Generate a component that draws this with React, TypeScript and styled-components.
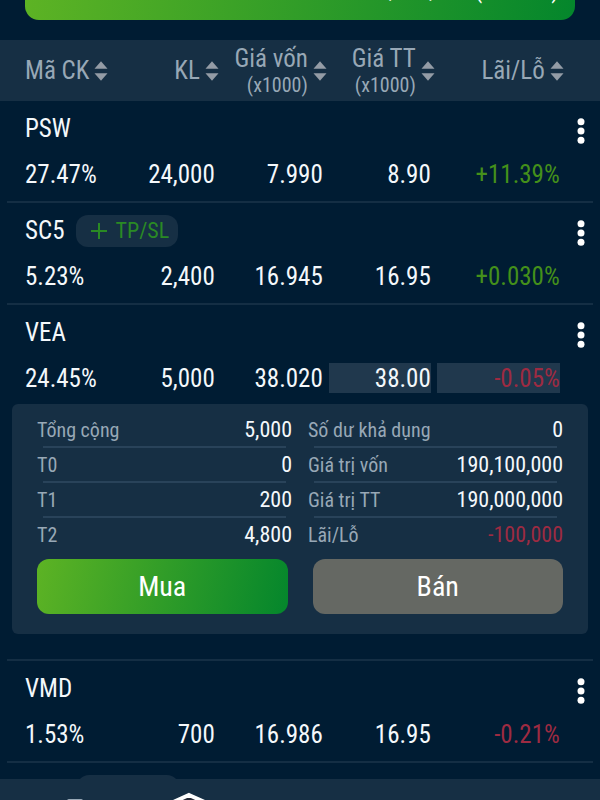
import React from "react";
import styled, { createGlobalStyle, css } from "styled-components";

const Global = createGlobalStyle`
  * { box-sizing: border-box; }
  body { margin: 0; background: #001c33; }
  body, button { font-family: "Roboto Condensed", Roboto, sans-serif; }
  svg { flex: none; }
`;

const Screen = styled.div`
  height: 100vh;
  display: flex;
  flex-direction: column;
  overflow: hidden;
  color: #f4f8fb;
  font-size: 25px;
  line-height: 30px;
`;

const Banner = styled.section`
  flex: none;
  height: 20px;
  margin: 0 25px 20px;
  padding: 0 16px 15px 0;
  display: flex;
  align-items: flex-end;
  justify-content: flex-end;
  overflow: hidden;
  border-radius: 0 0 14px 14px;
  background: linear-gradient(97deg, #5db324, #04862c);
  color: #ffffff;
  font-size: 24px;
`;

const List = styled.main`
  flex: 1;
  min-height: 0;
  overflow: hidden;
`;

const Table = styled.table`
  width: 100%;
  table-layout: fixed;
  border-collapse: collapse;

  td, th { padding: 0; font-weight: 400; }
`;

const Col = styled.col<{ $share?: number }>`
  width: ${(p) => (p.$share ? `${p.$share}%` : "auto")};
`;

const HeadRow = styled.tr`
  height: 61px;
  background: #162f44;
`;

const SortButton = styled.button<{ $start?: boolean }>`
  display: flex;
  align-items: center;
  justify-content: ${(p) => (p.$start ? "flex-start" : "flex-end")};
  gap: 5px;
  width: ${(p) => (p.$start ? "100%" : "calc(100% + 4px)")};
  padding: 0 0 0 ${(p) => (p.$start ? "25px" : "0")};
  border: 0;
  background: none;
  color: #98a8b6;
  font-size: 25px;
  line-height: 28px;
  text-align: right;
  white-space: nowrap;
`;

const Unit = styled.small`
  display: block;
  font-size: 20px;
  line-height: 24px;
`;

const NameRow = styled.tr`
  height: 52px;
`;

const NameLine = styled.div`
  display: flex;
  align-items: center;
  gap: 12px;
  padding: 3px 0 0 25px;
`;

const Chip = styled.button`
  display: flex;
  align-items: center;
  gap: 8px;
  height: 32px;
  padding: 0 9px 0 15px;
  border: 0;
  border-radius: 12px;
  background: #162f44;
  color: #2a8a24;
  font-size: 22px;
  line-height: 32px;
`;

const MoreButton = styled.button`
  display: flex;
  justify-content: center;
  width: 100%;
  padding: 8px 0 0 2px;
  border: 0;
  background: none;
  color: #ffffff;
`;

type Tone = "plain" | "up" | "down";
const tones: Record<Tone, string> = { plain: "inherit", up: "#44901a", down: "#9d2b42" };

const ValueRow = styled.tr`
  height: 42px;
`;

const Value = styled.div<{ $tone?: Tone; $lit?: boolean; $start?: boolean }>`
  margin-left: ${(p) => (p.$start ? "25px" : "6px")};
  padding-top: 1px;
  line-height: 29px;
  text-align: ${(p) => (p.$start ? "left" : "right")};
  color: ${(p) => tones[p.$tone ?? "plain"]};
  ${(p) => p.$lit && css`background: #20384d;`}
`;

const Divider = styled.div`
  margin: 6px 7px 0;
  height: 2px;
  background: #142e44;
`;

const Panel = styled.section`
  margin: 5px 12px 25px;
  height: 230px;
  padding: 7px 25px 0;
  border-radius: 6px;
  background: #162f44;
`;

const Facts = styled.div`
  display: grid;
  grid-template-columns: 1fr 1fr;
  column-gap: 16px;
`;

const FactList = styled.dl`
  margin: 0;
`;

const Fact = styled.div`
  display: flex;
  justify-content: space-between;
  height: 35px;
  padding-top: 5px;
  line-height: 28px;

  & + & { background: linear-gradient(#29435a, #29435a) center top / calc(100% - 12px) 2px no-repeat; }
`;

const Term = styled.dt`
  color: #98a8b6;
  font-size: 20px;
`;

const Amount = styled.dd<{ $tone?: Tone }>`
  margin: 0;
  color: ${(p) => tones[p.$tone ?? "plain"]};
  font-size: 22px;
`;

const Actions = styled.div`
  display: grid;
  grid-template-columns: 1fr 1fr;
  gap: 25px;
  margin-top: 8px;
`;

const Action = styled.button<{ $buy?: boolean }>`
  height: 55px;
  border: 0;
  border-radius: 12px;
  background: ${(p) => (p.$buy ? "linear-gradient(102deg, #5db324, #04862c)" : "#656863")};
  color: #ffffff;
  font-size: 28px;
`;

const Nav = styled.nav`
  flex: none;
  display: flex;
  height: 21px;
  overflow: hidden;
  background: #162f44;
`;

const Tab = styled.a<{ $active?: boolean }>`
  flex: 0 0 19%;
  display: flex;
  justify-content: center;
  padding-top: ${(p) => (p.$active ? "13px" : "18px")};
  color: ${(p) => (p.$active ? "#ffffff" : "#98a8b6")};

  &:first-child { flex-basis: 22%; padding-left: 18px; }
`;

const SortIcon = () => (
  <svg width="14" height="20" viewBox="0 0 14 20" fill="#949ca6" aria-hidden="true">
    <path d="M7 0.3 13.5 7.7H0.5Z" />
    <path d="M7 19.7 13.5 12.3H0.5Z" />
  </svg>
);

const PlusIcon = () => (
  <svg width="16" height="16" viewBox="0 0 16 16" stroke="currentColor" strokeWidth="2" aria-hidden="true">
    <path d="M8 0V16M0 8H16" />
  </svg>
);

const DotsIcon = () => (
  <svg width="8" height="28" viewBox="0 0 8 28" fill="currentColor" aria-hidden="true">
    <circle cx="4" cy="4.7" r="3.5" />
    <circle cx="4" cy="14" r="3.5" />
    <circle cx="4" cy="23.3" r="3.5" />
  </svg>
);

interface Stock {
  code: string;
  weight: string;
  volume: string;
  cost: string;
  price: string;
  gain: string;
  tone: Tone;
  chip?: boolean;
  open?: boolean;
}

const stocks: Stock[] = [
  { code: "PSW", weight: "27.47%", volume: "24,000", cost: "7.990", price: "8.90", gain: "+11.39%", tone: "up" },
  { code: "SC5", weight: "5.23%", volume: "2,400", cost: "16.945", price: "16.95", gain: "+0.030%", tone: "up", chip: true },
  { code: "VEA", weight: "24.45%", volume: "5,000", cost: "38.020", price: "38.00", gain: "-0.05%", tone: "down", open: true },
  { code: "VMD", weight: "1.53%", volume: "700", cost: "16.986", price: "16.95", gain: "-0.21%", tone: "down" },
];

const holdings = [["Tổng cộng", "5,000"], ["T0", "0"], ["T1", "200"], ["T2", "4,800"]];
const worth = [["Số dư khả dụng", "0"], ["Giá trị vốn", "190,100,000"], ["Giá trị TT", "190,000,000"], ["Lãi/Lỗ", "-100,000"]];
const columns = [["Mã CK"], ["KL"], ["Giá vốn", "(x1000)"], ["Giá TT", "(x1000)"], ["Lãi/Lỗ"]];

const TpSl = () => (
  <Chip type="button">
    <PlusIcon />
    TP/SL
  </Chip>
);

const FactColumn = ({ items }: { items: string[][] }) => (
  <FactList>
    {items.map(([term, amount]) => (
      <Fact key={term}>
        <Term>{term}</Term>
        <Amount $tone={amount.startsWith("-") ? "down" : "plain"}>{amount}</Amount>
      </Fact>
    ))}
  </FactList>
);

const StockRows = ({ stock }: { stock: Stock }) => (
  <tbody>
    <NameRow>
      <td colSpan={5}>
        <NameLine>
          {stock.code}
          {stock.chip && <TpSl />}
        </NameLine>
      </td>
      <td>
        <MoreButton type="button" aria-label={`${stock.code} menu`}>
          <DotsIcon />
        </MoreButton>
      </td>
    </NameRow>
    <ValueRow>
      <td><Value $start>{stock.weight}</Value></td>
      <td><Value>{stock.volume}</Value></td>
      <td><Value>{stock.cost}</Value></td>
      <td><Value $lit={stock.open}>{stock.price}</Value></td>
      <td><Value $lit={stock.open} $tone={stock.tone}>{stock.gain}</Value></td>
    </ValueRow>
    <tr>
      <td colSpan={6}>
        {stock.open && (
          <Panel>
            <Facts>
              <FactColumn items={holdings} />
              <FactColumn items={worth} />
            </Facts>
            <Actions>
              <Action type="button" $buy>Mua</Action>
              <Action type="button">Bán</Action>
            </Actions>
          </Panel>
        )}
        <Divider />
      </td>
    </tr>
  </tbody>
);

export default function App() {
  return (
    <Screen>
      <Global />
      <Banner>1,000,000 (+0.10%)</Banner>
      <List>
        <Table>
          <colgroup>
            <Col $share={17.8} />
            <Col $share={18} />
            <Col $share={18} />
            <Col $share={18} />
            <Col $share={21.5} />
            <Col />
          </colgroup>
          <thead>
            <HeadRow>
              {columns.map(([label, unit], i) => (
                <th key={label} scope="col">
                  <SortButton type="button" $start={i === 0}>
                    <span>
                      {label}
                      {unit && <Unit>{unit}</Unit>}
                    </span>
                    <SortIcon />
                  </SortButton>
                </th>
              ))}
              <td />
            </HeadRow>
          </thead>
          {stocks.map((stock) => (
            <StockRows key={stock.code} stock={stock} />
          ))}
          <tbody>
            <NameRow>
              <td colSpan={6}>
                <NameLine>
                  SCR
                  <TpSl />
                </NameLine>
              </td>
            </NameRow>
          </tbody>
        </Table>
      </List>
      <Nav>
        <Tab href="#market" aria-label="Thị trường">
          <svg width="18" height="18" viewBox="0 0 18 18" fill="currentColor" aria-hidden="true">
            <rect x="1" y="2" width="16" height="16" rx="2" />
          </svg>
        </Tab>
        <Tab href="#assets" aria-label="Tài sản" $active>
          <svg width="42" height="42" viewBox="0 0 42 42" fill="#262a36" stroke="currentColor" strokeWidth="4" aria-hidden="true">
            <path d="M21 3 41 12V31L21 40 1 31V12Z" />
          </svg>
        </Tab>
      </Nav>
    </Screen>
  );
}
